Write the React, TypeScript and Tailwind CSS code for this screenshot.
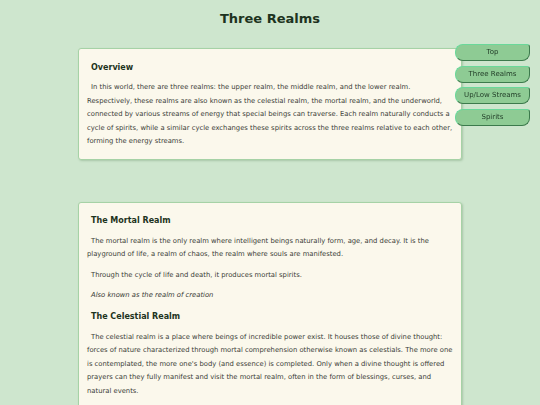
const navItems = ['Top', 'Three Realms', 'Up/Low Streams', 'Spirits'];

const NavButton = ({ label }: { label: string }) => (
  <button className="h-[17px] w-[75px] rounded-l-[8px] rounded-tr-[3px] rounded-br-[8px] border-t border-l border-t-[#6ad89a] border-l-[#6ad89a] border-r-[1.5px] border-b-[1.5px] border-r-[#3c7a4c] border-b-[#3c7a4c] bg-[#8ecb94] text-[7px] text-[#1f3a25]">
    {label}
  </button>
);

const Card = ({ children }: { children: React.ReactNode }) => (
  <section className="w-[384px] rounded-[3px] border border-[#a6d2a6] bg-[#fbf8ec] px-[8px] shadow-[1px_1px_2px_rgba(60,110,60,0.25)]">
    {children}
  </section>
);

const Heading = ({ children }: { children: React.ReactNode }) => (
  <h2 className="pl-[4px] text-[8px] font-bold leading-[12px] text-[#1d3320]">{children}</h2>
);

const Para = ({ children, italic }: { children: React.ReactNode; italic?: boolean }) => (
  <p className={`indent-[4px] text-[6.8px] leading-[13.5px] text-[#3a3c36] ${italic ? 'italic' : ''}`}>{children}</p>
);

export default function App() {
  return (
    <div className="min-h-[405px] bg-[#cee6ce] font-['DejaVu_Sans',Verdana,sans-serif]">
      <header className="flex h-[38px] items-center justify-center">
        <h1 className="text-[13px] font-bold text-[#1d3320]">Three Realms</h1>
      </header>

      <nav className="fixed right-[10px] top-[44px] flex flex-col gap-[4.5px]">
        {navItems.map((item) => (
          <NavButton key={item} label={item} />
        ))}
      </nav>

      <main className="mt-[10px] flex flex-col items-center gap-[42px] pb-[20px]">
        <Card>
          <div className="pt-[13px] pb-[10px]">
            <Heading>Overview</Heading>
            <div className="mt-[7px]">
              <Para>
                In this world, there are three realms: the upper realm, the middle realm, and the lower realm. Respectively, these realms are also known as the celestial realm, the mortal realm, and the underworld, connected by various streams of energy that special beings can traverse. Each realm naturally conducts a cycle of spirits, while a similar cycle exchanges these spirits across the three realms relative to each other, forming the energy streams.
              </Para>
            </div>
          </div>
        </Card>

        <Card>
          <div className="flex flex-col pt-[12px] pb-[12px]">
            <Heading>The Mortal Realm</Heading>
            <div className="mt-[8px] flex flex-col gap-[7px]">
              <Para>
                The mortal realm is the only realm where intelligent beings naturally form, age, and decay. It is the playground of life, a realm of chaos, the realm where souls are manifested.
              </Para>
              <Para>Through the cycle of life and death, it produces mortal spirits.</Para>
              <Para italic>Also known as the realm of creation</Para>
            </div>
            <div className="mt-[8px]">
              <Heading>The Celestial Realm</Heading>
            </div>
            <div className="mt-[8px] flex flex-col gap-[7px]">
              <Para>
                The celestial realm is a place where beings of incredible power exist. It houses those of divine thought: forces of nature characterized through mortal comprehension otherwise known as celestials. The more one is contemplated, the more one's body (and essence) is completed. Only when a divine thought is offered prayers can they fully manifest and visit the mortal realm, often in the form of blessings, curses, and natural events.
              </Para>
            </div>
          </div>
        </Card>
      </main>
    </div>
  );
}
